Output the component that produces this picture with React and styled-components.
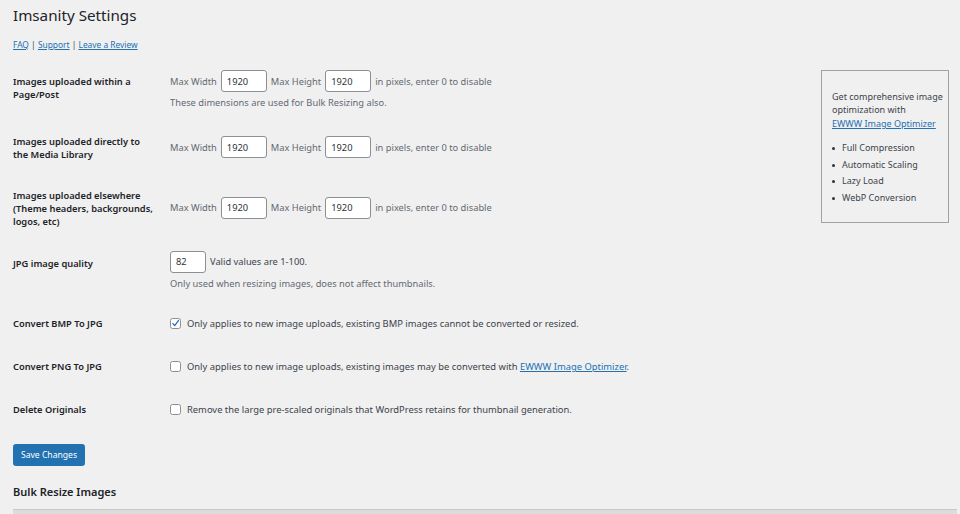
import React from "react";
import styled, { createGlobalStyle } from "styled-components";

const Global = createGlobalStyle`
  html, body { margin: 0; padding: 0; height: 100%; overflow: hidden; }
  body {
    background: #f0f0f1;
    font-family: "Noto Sans", "Open Sans", sans-serif;
    font-size: 9.3px;
    color: #3c434a;
  }
`;

const Page = styled.div`
  padding: 0 11px 0 13px;
`;

const Title = styled.h1`
  margin: 0;
  padding-top: 3.5px;
  font-size: 15.2px;
  line-height: 23px;
  font-weight: 400;
  color: #1d2327;
`;

const Links = styled.div`
  margin-top: 11px;
  font-size: 8.4px;
  line-height: 13px;
  color: #3c434a;
`;

const A = styled.a`
  color: #2271b1;
  text-decoration: underline;
  text-underline-offset: 1px;
`;

const Content = styled.div`
  margin-top: 8px;
  display: flex;
  align-items: flex-start;
`;

const Form = styled.div`
  flex: 1;
  min-width: 0;
`;

const Row = styled.div`
  display: grid;
  grid-template-columns: 157px 1fr;
  align-items: start;
  height: ${(p) => p.$h}px;
`;

const Label = styled.div`
  margin-top: ${(p) => p.$mt}px;
  font-weight: 600;
  color: #1d2327;
  line-height: 13px;
`;

const Field = styled.div`
  margin-top: ${(p) => p.$mt}px;
  line-height: 13px;
`;

const Line = styled.div`
  display: flex;
  align-items: center;
  gap: 4px;
  white-space: nowrap;
`;

const Muted = styled.span`
  color: #646970;
`;

const Desc = styled.div`
  margin-top: ${(p) => p.$mt || 4}px;
  color: #646970;
  line-height: 13px;
`;

const Input = styled.input`
  box-sizing: border-box;
  width: ${(p) => p.$w}px;
  height: 22px;
  margin: 0;
  padding: 0 5px;
  border: 1px solid #8c8f94;
  border-radius: 3px;
  background: #fff;
  color: #2c3338;
  font-family: inherit;
  font-size: 9.3px;
  outline: none;
`;

const Box = styled.span`
  box-sizing: border-box;
  width: 11px;
  height: 11px;
  flex: none;
  border: 1px solid #8c8f94;
  border-radius: 2.5px;
  background: #fff;
  display: inline-flex;
  align-items: center;
  justify-content: center;
`;

const CheckLine = styled.label`
  display: flex;
  align-items: center;
  gap: 6px;
  white-space: nowrap;
  color: #3c434a;
  font-size: 9.4px;
`;

const Checkbox = ({ checked }) => (
  <Box>
    {checked && (
      <svg width="11" height="11" viewBox="0 0 11 11">
        <path d="M2.3 5.6 L4.5 8.2 L9.3 1.8" fill="none" stroke="#2271b1" strokeWidth="1.5" strokeLinecap="round" strokeLinejoin="round" />
      </svg>
    )}
  </Box>
);

const Sidebar = styled.aside`
  box-sizing: border-box;
  width: 128px;
  margin-top: 11px;
  border: 1px solid #9ea3a8;
  padding: 19px 4px 16px 10px;
  color: #3c434a;
  font-size: 9px;
`;

const Para = styled.div`
  line-height: 13.8px;
  white-space: nowrap;
`;

const List = styled.ul`
  list-style: none;
  margin: 9.5px 0 0;
  padding: 0;
`;

const Item = styled.li`
  display: flex;
  align-items: center;
  gap: 7px;
  line-height: 16.5px;
`;

const Dot = styled.span`
  width: 3px;
  height: 3px;
  border-radius: 50%;
  background: #2c3338;
  flex: none;
`;

const Button = styled.button`
  margin-top: 12px;
  box-sizing: border-box;
  height: 22px;
  width: 72px;
  padding: 0;
  border: 1px solid #2271b1;
  border-radius: 2.5px;
  background: #2271b1;
  color: #fff;
  font-family: inherit;
  font-size: 8.6px;
  display: block;
`;

const H2 = styled.h2`
  margin: 16.5px 0 0;
  font-size: 11px;
  line-height: 17px;
  font-weight: 600;
  color: #1d2327;
`;

const Bar = styled.div`
  margin-top: 9px;
  height: 20px;
  margin-right: -8px;
  background: #dcdcde;
  border-top: 1px solid #c8c8ca;
`;

const DimFields = () => (
  <Line>
    <Muted>Max Width</Muted>
    <Input $w={46} defaultValue="1920" />
    <Muted>Max Height</Muted>
    <Input $w={46} defaultValue="1920" />
    <Muted>in pixels, enter 0 to disable</Muted>
  </Line>
);

export default function App() {
  return (
    <>
      <Global />
      <Page>
        <Title>Imsanity Settings</Title>
        <Links>
          <A href="#">FAQ</A> | <A href="#">Support</A> | <A href="#">Leave a Review</A>
        </Links>
        <Content>
          <Form>
            <Row $h={64}>
              <Label $mt={16}>Images uploaded within a<br />Page/Post</Label>
              <Field $mt={11.7}>
                <DimFields />
                <Desc>These dimensions are used for Bulk Resizing also.</Desc>
              </Field>
            </Row>
            <Row $h={52}>
              <Label $mt={12}>Images uploaded directly to<br />the Media Library</Label>
              <Field $mt={13.7}>
                <DimFields />
              </Field>
            </Row>
            <Row $h={67}>
              <Label $mt={14}>Images uploaded elsewhere<br />(Theme headers, backgrounds,<br />logos, etc)</Label>
              <Field $mt={22.3}>
                <DimFields />
              </Field>
            </Row>
            <Row $h={60}>
              <Label $mt={15.5}>JPG image quality</Label>
              <Field $mt={9}>
                <Line>
                  <Input $w={36} defaultValue="82" />
                  <span>Valid values are 1-100.</span>
                </Line>
                <Desc $mt={4.5}>Only used when resizing images, does not affect thumbnails.</Desc>
              </Field>
            </Row>
            <Row $h={43.5}>
              <Label $mt={15}>Convert BMP To JPG</Label>
              <Field $mt={15.3}>
                <CheckLine><Checkbox checked /><span>Only applies to new image uploads, existing BMP images cannot be converted or resized.</span></CheckLine>
              </Field>
            </Row>
            <Row $h={43.5}>
              <Label $mt={15}>Convert PNG To JPG</Label>
              <Field $mt={15.2}>
                <CheckLine><Checkbox /><span>Only applies to new image uploads, existing images may be converted with <A href="#">EWWW Image Optimizer</A>.</span></CheckLine>
              </Field>
            </Row>
            <Row $h={43.5}>
              <Label $mt={14.5}>Delete Originals</Label>
              <Field $mt={14.3}>
                <CheckLine><Checkbox /><span>Remove the large pre-scaled originals that WordPress retains for thumbnail generation.</span></CheckLine>
              </Field>
            </Row>
          </Form>
          <Sidebar>
            <Para>Get comprehensive image<br />optimization with<br /><A href="#">EWWW Image Optimizer</A></Para>
            <List>
              <Item><Dot />Full Compression</Item>
              <Item><Dot />Automatic Scaling</Item>
              <Item><Dot />Lazy Load</Item>
              <Item><Dot />WebP Conversion</Item>
            </List>
          </Sidebar>
        </Content>
        <Button>Save Changes</Button>
        <H2>Bulk Resize Images</H2>
        <Bar />
      </Page>
    </>
  );
}
